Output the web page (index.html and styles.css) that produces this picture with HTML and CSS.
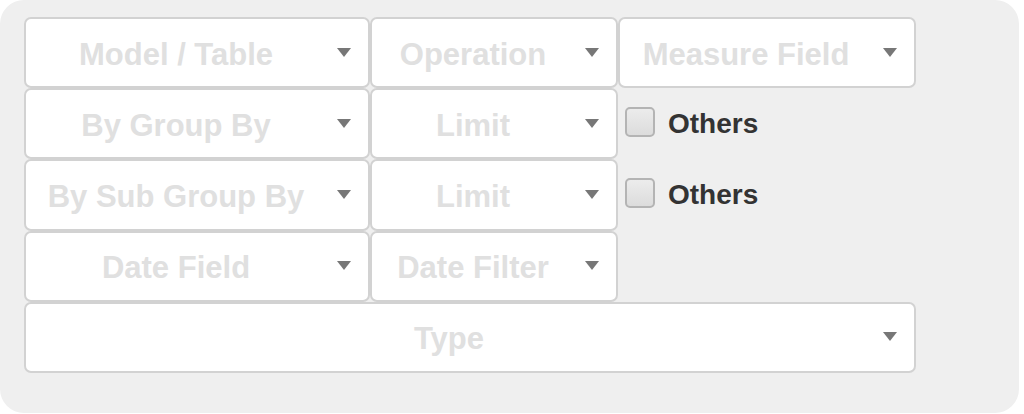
FILE: index.html
```html
<!DOCTYPE html>
<html>
<head>
<meta charset="utf-8">
<link rel="stylesheet" href="styles.css">
</head>
<body>
<div class="panel">
  <div class="grid">
    <div class="sel"><span class="ph">Model / Table</span><span class="caret"></span></div>
    <div class="sel"><span class="ph">Operation</span><span class="caret"></span></div>
    <div class="sel"><span class="ph">Measure Field</span><span class="caret"></span></div>

    <div class="sel"><span class="ph">By Group By</span><span class="caret"></span></div>
    <div class="sel"><span class="ph">Limit</span><span class="caret"></span></div>
    <label class="check"><span class="box"></span><span class="lbl">Others</span></label>

    <div class="sel"><span class="ph">By Sub Group By</span><span class="caret"></span></div>
    <div class="sel"><span class="ph">Limit</span><span class="caret"></span></div>
    <label class="check"><span class="box"></span><span class="lbl">Others</span></label>

    <div class="sel"><span class="ph">Date Field</span><span class="caret"></span></div>
    <div class="sel"><span class="ph">Date Filter</span><span class="caret"></span></div>
    <div class="empty"></div>

    <div class="sel wide"><span class="ph">Type</span><span class="caret"></span></div>
  </div>
</div>
</body>
</html>
```

FILE: styles.css
```css
html, body {
  margin: 0;
  padding: 0;
  background: #ffffff;
}

body {
  font-family: "Liberation Sans", Arial, sans-serif;
}

.panel {
  width: 1019px;
  height: 413px;
  box-sizing: border-box;
  background: #efefef;
  border-radius: 24px;
  padding: 17px 0 0 24px;
}

.grid {
  display: grid;
  grid-template-columns: 346px 248px 298px;
  grid-template-rows: repeat(5, 71.2px);
}

.sel {
  box-sizing: border-box;
  background: #ffffff;
  border: 2px solid #d2d2d2;
  border-radius: 7px;
  display: flex;
  align-items: center;
  padding: 0 17px 0 0;
}

.wide {
  grid-column: 1 / 4;
}

.ph {
  flex: 1;
  text-align: center;
  font-size: 31px;
  font-weight: bold;
  color: #e0e0e0;
  white-space: nowrap;
  padding-top: 4px;
}

.caret {
  width: 0;
  height: 0;
  margin-left: 11px;
  margin-bottom: 1px;
  border-left: 7px solid transparent;
  border-right: 7px solid transparent;
  border-top: 9px solid #777777;
}

.check {
  display: flex;
  align-items: center;
  padding-left: 7px;
}

.box {
  width: 30px;
  height: 30px;
  box-sizing: border-box;
  border: 2px solid #b4b4b4;
  border-radius: 5px;
  background: linear-gradient(#ececec, #dcdcdc);
  margin-right: 13px;
  margin-bottom: 4px;
}

.lbl {
  font-size: 28px;
  font-weight: bold;
  color: #333333;
}
```
